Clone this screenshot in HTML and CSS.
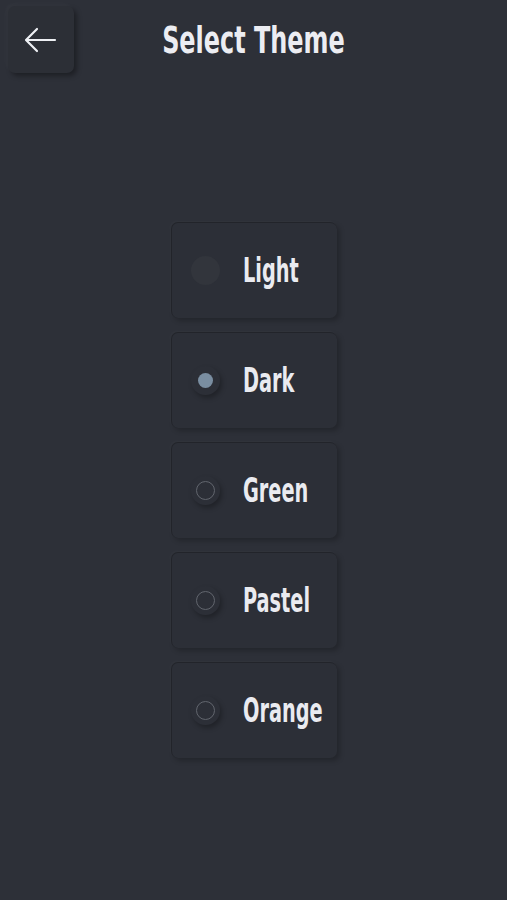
FILE: index.html
```html
<!DOCTYPE html>
<html>
<head>
<meta charset="utf-8">
<link rel="stylesheet" href="styles.css">
</head>
<body>
<div class="app">
  <header class="header">
    <button class="back" aria-label="Back">
      <svg width="34" height="26" viewBox="0 0 34 26"><path d="M31 13H3M13 2L2 13l11 11" fill="none" stroke="#eef0f4" stroke-width="2.2" stroke-linecap="round" stroke-linejoin="round"/></svg>
    </button>
    <h1 class="title">Select Theme</h1>
    <div></div>
  </header>
  <main class="list">
    <div class="card"><span class="radio radio-light"></span><span class="label">Light</span></div>
    <div class="card"><span class="radio radio-on"><span class="dot"></span></span><span class="label">Dark</span></div>
    <div class="card"><span class="radio"><span class="ring"></span></span><span class="label">Green</span></div>
    <div class="card"><span class="radio"><span class="ring"></span></span><span class="label">Pastel</span></div>
    <div class="card"><span class="radio"><span class="ring"></span></span><span class="label">Orange</span></div>
  </main>
</div>
</body>
</html>
```
FILE: styles.css
```css
html, body {
  margin: 0;
  padding: 0;
  background: #2d3038;
  height: 100%;
}
.app {
  font-family: "DejaVu Sans Condensed", "DejaVu Sans", sans-serif;
  color: #eaebf0;
}
.header {
  display: grid;
  grid-template-columns: 1fr auto 1fr;
  align-items: center;
  padding: 6px 8px 0 8px;
}
.back {
  width: 66px;
  height: 67px;
  border: none;
  border-radius: 7px;
  background: #2c2f36;
  display: flex;
  align-items: center;
  justify-content: center;
  box-shadow: 3px 3px 5px rgba(0,0,0,0.35), -2px -2px 4px rgba(255,255,255,0.03);
  padding: 0;
  justify-self: start;
}
.title {
  margin: 0;
  font-size: 38px;
  font-weight: bold;
  line-height: 44px;
  color: #ecedf2;
  transform: scaleX(0.7);
  transform-origin: center;
  white-space: nowrap;
}
.list {
  display: flex;
  flex-direction: column;
  align-items: center;
  gap: 14px;
  margin-top: 149px;
}
.card {
  width: 166px;
  height: 96px;
  box-sizing: border-box;
  border-radius: 7px;
  background: #2c2f37;
  border-top: 1px solid rgba(0,0,0,0.22);
  border-left: 1px solid rgba(0,0,0,0.22);
  box-shadow: 3px 3px 5px rgba(0,0,0,0.22), -1px -1px 3px rgba(255,255,255,0.03);
  display: flex;
  align-items: center;
  padding-left: 19px;
  gap: 23px;
}
.radio {
  width: 29px;
  height: 29px;
  border-radius: 50%;
  display: flex;
  align-items: center;
  justify-content: center;
  flex: none;
  box-shadow: 2px 3px 5px rgba(0,0,0,0.28);
}
.radio-light {
  background: #32353c;
  box-shadow: none;
}
.ring {
  width: 19px;
  height: 19px;
  border-radius: 50%;
  border: 1.5px solid #62666e;
  box-sizing: border-box;
}
.dot {
  width: 15px;
  height: 15px;
  border-radius: 50%;
  background: #7a8ea1;
}
.label {
  display: inline-block;
  font-size: 33px;
  line-height: 40px;
  font-weight: bold;
  color: #eaebf0;
  transform: scaleX(0.65);
  transform-origin: left center;
  white-space: nowrap;
}
```
